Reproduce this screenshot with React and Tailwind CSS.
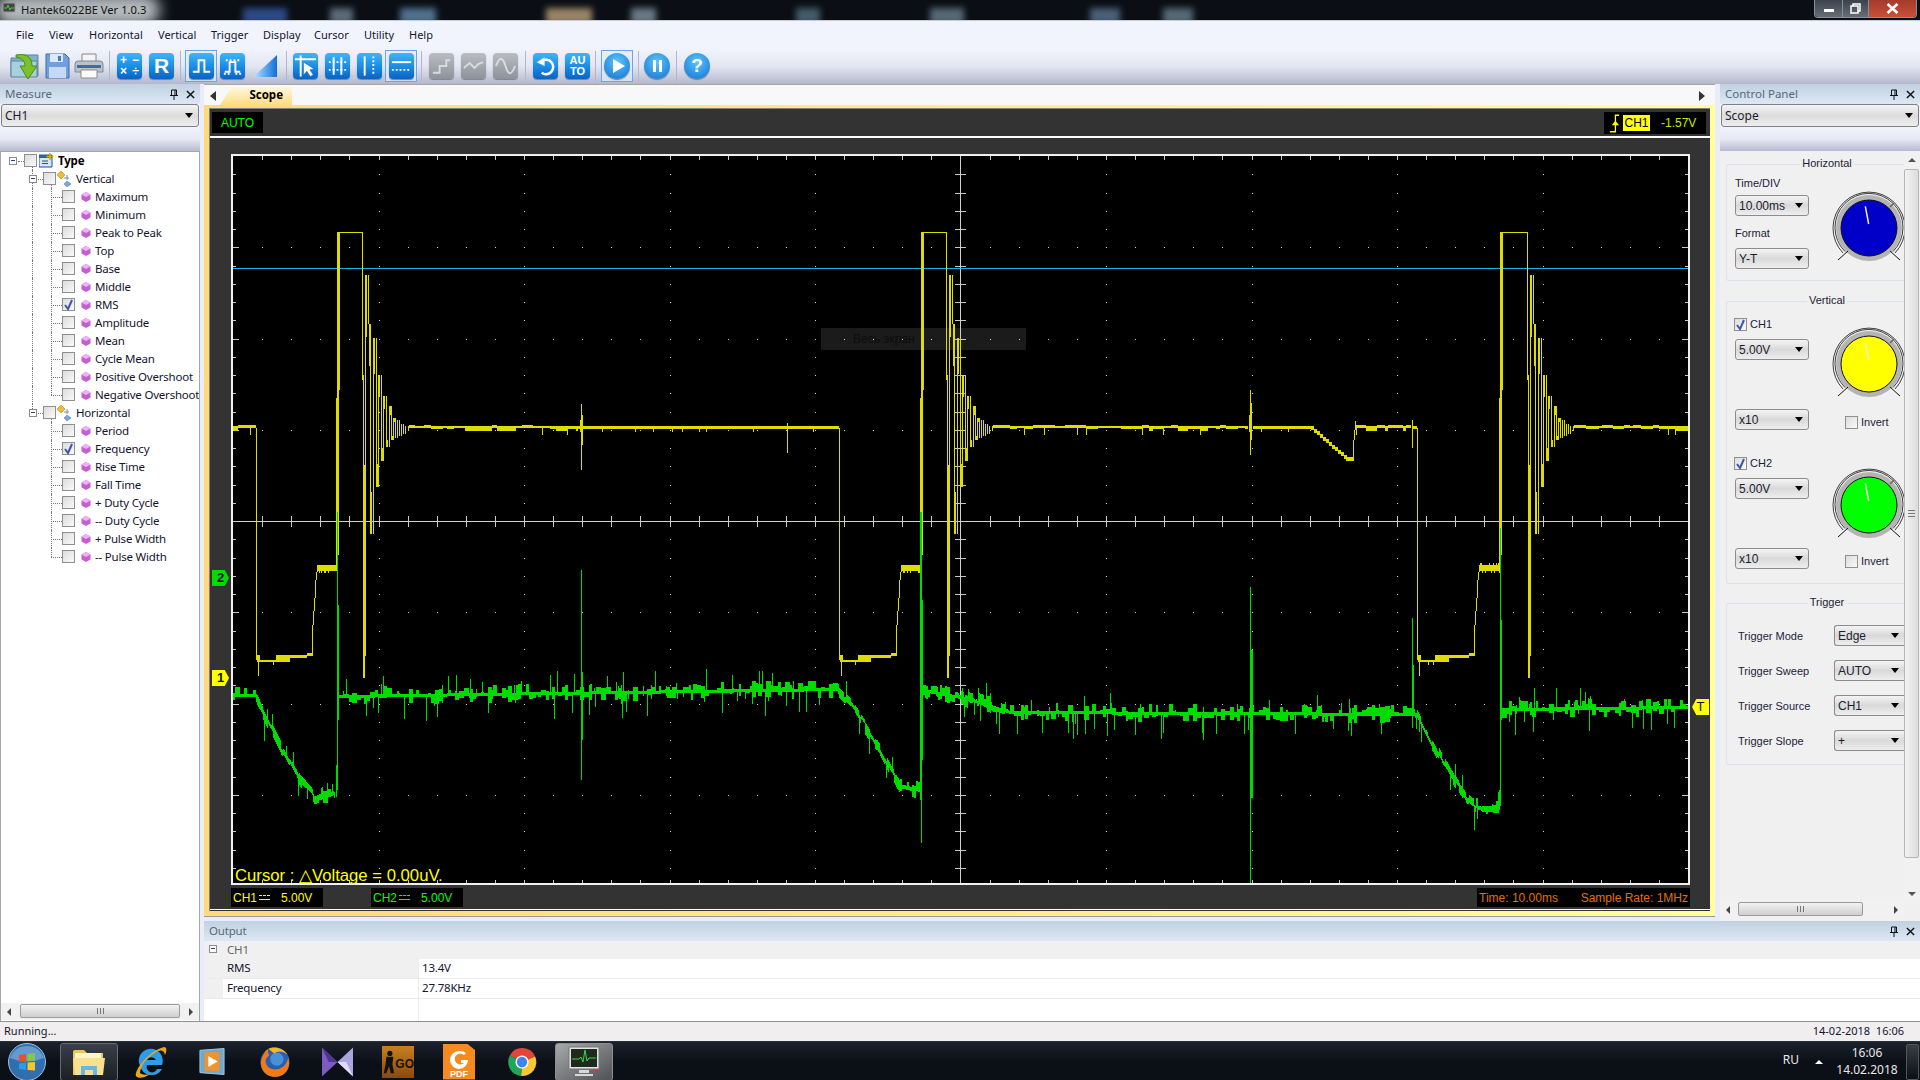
// App.jsx - Hantek6022BE scope window
import React from 'react';

// ---------- waveform generation ----------
function makeRand(seed) {
  let s = seed;
  return () => {
    s = (s * 1664525 + 1013904223) % 4294967296;
    return s / 4294967296;
  };
}

const RING = [
  [3, 275], [6, 324], [8, 534], [11, 338], [14, 487], [16, 375], [19, 461], [21, 396],
  [24, 447], [27, 406], [29, 440], [31, 418], [33, 438], [35, 420], [37, 436], [39, 424],
  [41, 434], [43, 426], [46, 431],
];

function buildYellow() {
  const r = makeRand(7);
  const p = [];
  const col = (x, a, b) => p.push(`M${x}.5 ${a}V${b}`);

  const noisy = (x0, x1) => {
    let x = x0;
    while (x < x1) {
      const len = 3 + Math.floor(r() * 10);
      const k = r();
      const top = k < 0.25 ? 425 : 426;
      const bot = k > 0.75 ? 431 : k > 0.45 ? 429 : 428;
      for (let i = x; i < Math.min(x + len, x1); i++) col(i, top, bot);
      if (r() < 0.12) col(x, top, 435);
      x += len;
    }
  };
  const flat = (x0, x1) => {
    for (let x = x0; x < x1; x++) col(x, 426, r() < 0.02 ? 432 : 429);
  };

  const pulse = (drop, tS, tE, rise, up, fall, bump) => {
    col(drop, 428, 660);
    for (let i = 1; i < 4; i++) col(drop + i, 655, 662);
    col(drop + 2, 655, 676);
    for (let x = drop + 4; x < tS; x++) col(x, 660, r() < 0.15 ? 665 : 662);
    for (let x = tS; x < tE; x++) col(x, 655, 662);
    for (let x = tE; x < rise; x++) col(x, x > rise - 6 ? 653 : 655, x > rise - 6 ? 656 : 658);
    col(rise, 625, 656);
    col(rise + 1, 611, 625);
    col(rise + 2, 598, 611);
    col(rise + 3, 580, 598);
    col(rise + 4, 572, 580);
    col(rise + 5, 565, 572);
    for (let x = rise + 6; x < up; x++) col(x, bump && r() < 0.2 ? 563 : 565, r() < 0.2 ? 573 : 571);
    col(up - 1, 398, 567);
    col(up, 232, 568);
    col(up + 1, 232, 555);
    col(up + 2, 232, 390);
    p.push(`M${up} 232.5H${fall}`);
    col(fall, 232, 380);
    col(fall + 1, 375, 678);
    col(fall + 2, 465, 678);
    col(fall + 3, 465, 656);
    let prev = 465;
    RING.forEach(([dx, y], i) => {
      col(fall + dx, Math.min(prev, y), Math.max(prev, y));
      if (i < 12) {
        const mid = y + (429 - y) * 0.4;
        col(fall + dx + 1, Math.min(y, mid), Math.max(y, mid));
      }
      prev = y;
    });
  };

  noisy(233, 256);
  pulse(256, 276, 290, 312, 337, 362, false);
  noisy(409, 578);
  flat(578, 835);
  col(581, 404, 470);
  col(582, 415, 445);
  col(580, 420, 432);
  col(787, 423, 453);
  flat(835, 839);
  pulse(839, 858, 871, 896, 921, 946, false);
  noisy(993, 1248);
  flat(1253, 1311);
  col(1250, 390, 455);
  col(1251, 403, 440);
  col(1249, 415, 432);
  for (let x = 1311; x < 1345; x += 3) {
    const m = 428 + ((x - 1311) / 34) * 30;
    for (let i = 0; i < 3; i++) col(x + i, Math.round(m) - 2, Math.round(m) + 2);
  }
  for (let x = 1346; x < 1353; x++) col(x, 457, 461);
  col(1353, 440, 461);
  col(1354, 430, 440);
  col(1355, 421, 430);
  noisy(1356, 1411);
  col(1412, 420, 448);
  noisy(1413, 1417);
  pulse(1417, 1435, 1449, 1474, 1500, 1527, true);
  noisy(1574, 1688);
  return p.join('');
}

function buildGreen() {
  const r = makeRand(21);
  const p = [];
  const col = (x, a, b) => p.push(`M${x}.5 ${a}V${b}`);

  const noise = (x0, x1, y0, y1) => {
    let bump = 0;
    let dip = 0;
    let left = 0;
    for (let x = x0; x < x1; x++) {
      if (left-- <= 0) {
        left = Math.floor(r() * 5);
        bump = r() < 0.6 ? Math.floor(r() * 9) : 0;
        dip = r() < 0.55 ? Math.floor(r() * 8) : 0;
      }
      const b = Math.round(y0 + ((x - x0) / (x1 - x0)) * (y1 - y0));
      let top = b - 1 - bump;
      let bot = b + 2 + dip;
      const k = r();
      if (k < 0.085) bot = b + 10 + Math.floor(r() * 18);
      else if (k < 0.11) top = b - 9 - Math.floor(r() * 14);
      col(x, top, bot);
    }
  };
  const ramp = (pts) => {
    let off = 0;
    let t = 0;
    let h = 3;
    for (let i = 0; i < pts.length - 1; i++) {
      const [x0, y0] = pts[i];
      const [x1, y1] = pts[i + 1];
      for (let x = x0; x < x1; x++) {
        if (t-- <= 0) {
          t = 1 + Math.floor(r() * 4);
          off = Math.floor(r() * 7) - 3;
          h = 2 + Math.floor(r() * 5);
        }
        const b = y0 + ((x - x0) / (x1 - x0)) * (y1 - y0);
        let top = Math.round(b + off - h);
        let bot = Math.round(b + off + h);
        const k = r();
        if (k < 0.06) bot += 10 + Math.floor(r() * 12);
        else if (k < 0.09) top -= 8 + Math.floor(r() * 6);
        col(x, top, bot);
      }
    }
  };

  noise(233, 257, 695, 695);
  ramp([[257, 703], [267, 722], [273, 733], [280, 747], [290, 763], [300, 780], [310, 790], [314, 797], [335, 793]]);
  col(336, 765, 797);
  col(337, 512, 790);
  col(338, 605, 720);
  noise(339, 839, 696, 689);
  ramp([[839, 692], [850, 702], [860, 718], [870, 733], [880, 750], [890, 770], [900, 785], [920, 790]]);
  col(920, 512, 800);
  col(921, 512, 843);
  col(922, 600, 760);
  noise(923, 965, 690, 698);
  noise(965, 1010, 698, 712);
  noise(1010, 1417, 712, 714);
  col(1250, 587, 883);
  col(1251, 650, 798);
  col(1252, 650, 798);
  col(581, 570, 780);
  col(582, 672, 740);
  col(1412, 618, 728);
  col(1413, 665, 716);
  ramp([[1417, 714], [1425, 730], [1440, 757], [1450, 773], [1465, 798], [1475, 806], [1499, 808]]);
  col(1499, 790, 810);
  col(1500, 528, 806);
  col(1501, 620, 720);
  noise(1502, 1688, 709, 707);
  return p.join('');
}

function buildGrid() {
  const dots = [];
  const ticks = [];
  const bright = [];
  const X0 = 233;
  const X1 = 1688;
  const Y0 = 156;
  const Y1 = 884;
  for (let i = 0; i <= 50; i++) {
    const x = Math.round(X0 + i * 29.1);
    if (i % 25 === 0 && i !== 25) continue;
    if (i !== 25) {
      bright.push(`M${x}.5 516V527`);
      ticks.push(`M${x}.5 ${Y0}V${Y0 + 4}M${x}.5 ${Y1 - 4}V${Y1}`);
    }
    for (let j = 1; j < 8; j++) {
      if (j === 4) continue;
      dots.push(`M${x} ${Math.round(Y0 + j * 91.25)}h1v1h-1z`);
    }
  }
  for (let j = 0; j <= 40; j++) {
    const y = Math.round(Y0 + j * 18.25);
    if (j === 0 || j === 40) continue;
    if (j !== 20) {
      bright.push(`M955 ${y}.5H966`);
      ticks.push(`M${X0} ${y}.5H${X0 + (j % 5 === 0 ? 6 : 3)}M${X1 - (j % 5 === 0 ? 6 : 3)} ${y}.5H${X1}`);
    }
    for (let i = 1; i < 10; i++) {
      if (i === 5) continue;
      dots.push(`M${Math.round(X0 + i * 145.5)} ${y}h1v1h-1z`);
    }
  }
  return { dots: dots.join(''), ticks: ticks.join(''), bright: bright.join('') };
}

const YELLOW = buildYellow();
const GREEN = buildGreen();
const GRID = buildGrid();

function Traces() {
  return (
    <svg viewBox="233 156 1455 727" className="relative block w-[1455px] h-[727px]" shapeRendering="crispEdges">
      <path d={GRID.dots} fill="#d8d8d8" />
      <path d={GRID.ticks} stroke="#c8c8c8" fill="none" />
      <path d={GRID.bright} stroke="#c8c8c8" fill="none" />
      <path d="M233 521.5H1688M960.5 156V884" stroke="#cfcfcf" fill="none" />
      <path d="M233 268.5H1688" stroke="#14b4e6" fill="none" />
      <path d={YELLOW} stroke="#dedc00" fill="none" />
      <path d={GREEN} stroke="#00dc00" fill="none" />
    </svg>
  );
}

// ---------- small widgets ----------
function Arrow({ className = '' }) {
  return <span className={`block w-0 h-0 border-x-[4px] border-x-transparent border-t-[5px] border-t-black ${className}`} />;
}

function Select({ value, className = '', clipped }) {
  return (
    <div className={`flex items-center justify-between h-[21px] border border-[#8c8c8c] rounded-[3px] bg-gradient-to-b from-[#f4f4f4] via-[#d9d9d9] to-[#eeeeee] pl-[3px] pr-[5px] text-[12px] text-[#1c1c30] font-['Liberation_Sans',sans-serif] ${clipped ? 'border-r-0 rounded-r-none pr-0' : ''} ${className}`}>
      <span>{value}</span>
      <Arrow className="mr-[0px]" />
    </div>
  );
}

function Check({ checked, className = '' }) {
  return (
    <span className={`relative block shrink-0 w-[13px] h-[13px] border border-[#8e8f8f] bg-gradient-to-br from-[#dcdcdc] to-[#fafafa] ${className}`}>
      {checked && (
        <svg viewBox="0 0 13 13" className="absolute left-[-1px] top-[-1px] w-[13px] h-[13px]">
          <path d="M3 7L6 11L10 2" stroke="#3f55a5" strokeWidth="2" fill="none" />
        </svg>
      )}
    </span>
  );
}

function PanelHeader({ title }) {
  return (
    <div className="flex items-center h-[20px] bg-gradient-to-b from-[#c0d1e1] to-[#dde8f4] pl-[5px] pr-[5px] shrink-0">
      <span className="text-[11.5px] text-[#5a6878] flex-1">{title}</span>
      <svg viewBox="0 0 10 11" className="w-[10px] h-[11px] mr-[7px]">
        <path d="M2.5 1H7.5V6.5H2.5ZM6 1V6.5M1 6.5H9M5 7V11" stroke="#111" fill="none" />
      </svg>
      <svg viewBox="0 0 10 10" className="w-[9px] h-[9px]">
        <path d="M1 1L9 9M9 1L1 9" stroke="#111" strokeWidth="1.6" />
      </svg>
    </div>
  );
}

function Band() {
  return <div className="h-[24px] shrink-0 bg-gradient-to-b from-[#f1f4fd] via-[#e6e8f4] to-[#b8bbcf]" />;
}

function HScroll({ left, width, track }) {
  return (
    <div className={`relative h-[17px] shrink-0 ${track}`}>
      <span className="absolute left-[6px] top-[5px] w-0 h-0 border-y-[4px] border-y-transparent border-r-[4px] border-r-[#444]" />
      <div style={{ left, width }} className="absolute top-[1px] h-[14px] border border-[#9a9a9a] rounded-[2px] bg-gradient-to-b from-[#f2f2f2] to-[#cfcfcf] flex items-center justify-center">
        <span className="block w-[7px] h-[6px] border-x border-[#777] relative">
          <span className="absolute left-[2px] top-0 h-[6px] border-l border-[#777]" />
        </span>
      </div>
      <span className="absolute right-[6px] top-[5px] w-0 h-0 border-y-[4px] border-y-transparent border-l-[4px] border-l-[#444]" />
    </div>
  );
}

// ---------- tree ----------
const VERTICAL = ['Maximum', 'Minimum', 'Peak to Peak', 'Top', 'Base', 'Middle', 'RMS', 'Amplitude', 'Mean', 'Cycle Mean', 'Positive Overshoot', 'Negative Overshoot'];
const HORIZONTAL = ['Period', 'Frequency', 'Rise Time', 'Fall Time', '+ Duty Cycle', '-- Duty Cycle', '+ Pulse Width', '-- Pulse Width'];

function MinusBox({ className = '' }) {
  return (
    <span className={`absolute block w-[8px] h-[8px] border border-[#8a8a8a] bg-white ${className}`}>
      <span className="absolute left-[1px] top-[2px] w-[4px] h-[1px] bg-[#2b3f8c]" />
    </span>
  );
}

function Gem() {
  return (
    <svg viewBox="0 0 10 10" className="absolute left-[80px] top-[4px] w-[10px] h-[10px]">
      <path d="M5 0L9.5 2.5V7.5L5 10L.5 7.5V2.5Z" fill="#c45fd0" />
      <path d="M5 0L9.5 2.5L5 5L.5 2.5Z" fill="#eeb4f2" />
    </svg>
  );
}

function LeafRow({ label, checked, last, lineGoes }) {
  return (
    <div className="relative h-[18px]">
      {lineGoes && <span className="absolute left-[31px] top-0 h-[18px] border-l border-dotted border-[#777]" />}
      <span className={`absolute left-[50px] top-0 border-l border-dotted border-[#777] ${last ? 'h-[9px]' : 'h-[18px]'}`} />
      <span className="absolute left-[50px] top-[9px] w-[11px] border-t border-dotted border-[#777]" />
      <Check checked={checked} className="absolute left-[61px] top-[2px]" />
      <Gem />
      <span className="absolute left-[94px] top-0 leading-[18px] whitespace-nowrap text-[#14142e]">{label}</span>
    </div>
  );
}

function GroupRow({ label, lineDown }) {
  return (
    <div className="relative h-[18px]">
      <span className={`absolute left-[31px] top-0 border-l border-dotted border-[#777] ${lineDown ? 'h-[18px]' : 'h-[9px]'}`} />
      <span className="absolute left-[35px] top-[9px] w-[7px] border-t border-dotted border-[#777]" />
      <span className="absolute left-[50px] top-[13px] h-[5px] border-l border-dotted border-[#777]" />
      <MinusBox className="left-[28px] top-[5px]" />
      <Check className="absolute left-[42px] top-[2px]" />
      <svg viewBox="0 0 16 16" className="absolute left-[55px] top-[1px] w-[16px] h-[16px]">
        <path d="M5 0L9 4L5 8L1 4Z" fill="#eebb33" stroke="#a67c10" strokeWidth=".5" />
        <path d="M11 4V9M8 7H13" stroke="#7a8ab0" fill="none" />
        <path d="M11 10L15 13L11 16L8 13Z" fill="#77a8e0" stroke="#4a72b0" strokeWidth=".5" />
      </svg>
      <span className="absolute left-[75px] top-0 leading-[18px] text-[#14142e]">{label}</span>
    </div>
  );
}

function MeasureTree() {
  return (
    <div className="flex-1 text-[11.5px] tracking-[-0.2px] border-t border-[#a6a6a6] overflow-hidden">
      <div className="relative h-[18px]">
        <MinusBox className="left-[8px] top-[5px]" />
        <span className="absolute left-[17px] top-[9px] w-[6px] border-t border-dotted border-[#777]" />
        <span className="absolute left-[31px] top-[15px] h-[3px] border-l border-dotted border-[#777]" />
        <Check className="absolute left-[23px] top-[2px]" />
        <svg viewBox="0 0 15 15" className="absolute left-[38px] top-[1px] w-[15px] h-[15px]">
          <path d="M0 2H13V14H0Z" fill="#dbe6f5" stroke="#1f4f95" />
          <path d="M0 2H13V5H0Z" fill="#2a62ad" />
          <path d="M3 8H9M3 10.5H9" stroke="#1f4f95" fill="none" />
          <path d="M11 0V7M7.500 3.500H14.500" stroke="#e8a800" strokeWidth="1.600" />
        </svg>
        <span className="absolute left-[57px] top-0 leading-[18px] font-bold text-black">Type</span>
      </div>
      <GroupRow label="Vertical" lineDown />
      {VERTICAL.map((name, i) => (
        <LeafRow key={name} label={name} checked={name === 'RMS'} last={i === VERTICAL.length - 1} lineGoes />
      ))}
      <GroupRow label="Horizontal" />
      {HORIZONTAL.map((name, i) => (
        <LeafRow key={name} label={name} checked={name === 'Frequency'} last={i === HORIZONTAL.length - 1} />
      ))}
    </div>
  );
}

// ---------- toolbar ----------
const BLUE = 'bg-gradient-to-b from-[#3fb6f8] via-[#1b8ee6] to-[#0a63c4]';
const GREY = 'bg-gradient-to-b from-[#b9bcc3] to-[#8e929b]';

function Tool({ children, tone = BLUE, className = '' }) {
  return (
    <div className={`relative flex items-center justify-center shrink-0 w-[25px] h-[26px] rounded-[4px] shadow-[0_1px_1px_#7d8090] ${tone} ${className}`}>
      {children}
    </div>
  );
}

function Glyph({ d, dash, color = 'white' }) {
  return (
    <svg viewBox="0 0 26 26" className="w-[25px] h-[26px]">
      <path d={d} stroke={color} strokeWidth="2" fill="none" />
      {dash && <path d={dash} stroke={color} strokeWidth="2" strokeDasharray="2 2" fill="none" />}
    </svg>
  );
}

function Picked({ children, className = '' }) {
  return (
    <div className={`flex items-center justify-center shrink-0 w-[32px] h-[32px] border border-[#6aa6ee] bg-[#e3ecfa]/70 ${className}`}>
      {children}
    </div>
  );
}

function Sep({ className = '' }) {
  return <span className={`block w-[1px] h-[30px] bg-[#b3b6c8] shrink-0 ${className}`} />;
}

function RoundTool({ children, className = '' }) {
  return (
    <div className={`flex items-center justify-center shrink-0 w-[26px] h-[26px] rounded-full bg-[radial-gradient(circle_at_50%_35%,#5cc6fb,#0f6fcf)] shadow-[0_1px_1px_#7d8090] ${className}`}>
      {children}
    </div>
  );
}

function Toolbar() {
  return (
    <div className="flex items-center h-[36px] shrink-0 pl-[10px] bg-gradient-to-b from-[#f1f4fd] via-[#e4e7f2] to-[#b5b8cc]">
      <svg viewBox="0 0 30 28" className="w-[30px] h-[28px] shrink-0">
        <path d="M1 6H11L13 3H28V24H1Z" fill="#7fb3c9" stroke="#5a8499" />
        <path d="M1 9H27V25H1Z" fill="#a8cfdd" stroke="#5a8499" />
        <path d="M6 3C18 1 22 6 22 14H27L18 27L10 14H15C15 9 12 6 6 5Z" fill="#7cc02a" stroke="#4d8a12" />
      </svg>
      <svg viewBox="0 0 25 26" className="w-[25px] h-[26px] ml-[5px] shrink-0">
        <path d="M1 1H20L24 5V25H1Z" fill="#6f9fdd" stroke="#3f6cb0" />
        <path d="M5 1H18V9H5Z" fill="#dce8f8" />
        <path d="M13 3H16V8H13Z" fill="#4a78bb" />
        <path d="M4 14H21V25H4Z" fill="#c5d9f3" />
      </svg>
      <svg viewBox="0 0 30 26" className="w-[30px] h-[26px] ml-[4px] shrink-0">
        <path d="M8 1H22V10H8Z" fill="#f4f4f4" stroke="#888" />
        <path d="M1 11Q1 8 4 8H26Q29 8 29 11V19H1Z" fill="#b8c2cd" stroke="#7f8a96" />
        <path d="M3 12H27V15H3Z" fill="#3d6f9e" />
        <path d="M7 17H23V25H7Z" fill="#fafafa" stroke="#8e8e8e" />
      </svg>
      <Sep className="ml-[5px]" />
      <Tool className="ml-[7px] text-white font-['Liberation_Sans',sans-serif] font-bold text-[12px] leading-[11px]">
        <div className="grid grid-cols-2 gap-x-[5px] text-center">
          <span>+</span><span>−</span><span>×</span><span>÷</span>
        </div>
      </Tool>
      <Tool className="ml-[7px] text-white font-['Liberation_Sans',sans-serif] font-bold text-[21px]">R</Tool>
      <Sep className="ml-[6px]" />
      <Picked className="ml-[4px]"><Tool><Glyph d="M4 19H10V7H16V19H22" /></Tool></Picked>
      <Tool className="ml-[3px]"><Glyph d="M5 19H10V9H16V19H21" dash="M6 7H20M4 21H10M16 21H22" /></Tool>
      <svg viewBox="0 0 26 26" className="w-[26px] h-[24px] ml-[7px] shrink-0">
        <defs>
          <linearGradient id="ramp" x1="0" x2="1" y1="0" y2="0">
            <stop offset="0" stopColor="#bfe6fb" />
            <stop offset="1" stopColor="#0f6fd6" />
          </linearGradient>
        </defs>
        <path d="M0 25L26 1V25Z" fill="url(#ramp)" />
      </svg>
      <Sep className="ml-[8px]" />
      <Tool className="ml-[6px]">
        <svg viewBox="0 0 26 26" className="w-[25px] h-[26px]">
          <path d="M2 6H24M8 2V24" stroke="white" strokeWidth="2" fill="none" />
          <path d="M11 9V22L14.500 18.500L18 24L21 22L17.500 17L22 16Z" fill="white" stroke="#0a63c4" strokeWidth=".5" />
        </svg>
      </Tool>
      <Tool className="ml-[7px]"><Glyph d="M9 4V22M17 4V22" dash="M4 9H22M4 17H22" /></Tool>
      <Tool className="ml-[7px]"><Glyph d="M8 3V23" dash="M17 3V23" /></Tool>
      <Picked className="ml-[3px]"><Tool><Glyph d="M3 9H23" dash="M3 17H23" /></Tool></Picked>
      <Sep className="ml-[4px]" />
      <Tool tone={GREY} className="ml-[7px]"><Glyph d="M4 20H11V13H18V7H22" color="#d9dbe0" /></Tool>
      <Tool tone={GREY} className="ml-[7px]"><Glyph d="M3 15L9 10L14 15L18 11L23 9" color="#d9dbe0" /></Tool>
      <Tool tone={GREY} className="ml-[7px]"><Glyph d="M3 13C7 3 10 3 13 13S19 23 23 13" color="#d9dbe0" /></Tool>
      <Sep className="ml-[7px]" />
      <Tool className="ml-[7px]">
        <svg viewBox="0 0 26 26" className="w-[25px] h-[26px]">
          <path d="M9 8A7.500 7.500 0 1 1 9 20" stroke="white" strokeWidth="2.600" fill="none" />
          <path d="M4 9L12 4V13Z" fill="white" />
        </svg>
      </Tool>
      <Tool className="ml-[7px] text-white font-['Liberation_Sans',sans-serif] font-bold text-[11px] leading-[11px] text-center">
        <span>AU<br />TO</span>
      </Tool>
      <Sep className="ml-[5px]" />
      <Picked className="ml-[5px]">
        <RoundTool><svg viewBox="0 0 26 26" className="w-[26px] h-[26px]"><path d="M9 6L21 13L9 20Z" fill="white" /></svg></RoundTool>
      </Picked>
      <Sep className="ml-[5px]" />
      <RoundTool className="ml-[5px]"><svg viewBox="0 0 26 26" className="w-[26px] h-[26px]"><path d="M9 7H12V19H9ZM15 7H18V19H15Z" fill="white" /></svg></RoundTool>
      <Sep className="ml-[6px]" />
      <RoundTool className="ml-[7px] text-white font-['Liberation_Sans',sans-serif] font-bold text-[19px]">?</RoundTool>
    </div>
  );
}

// ---------- knob ----------
function Knob({ color, className = '' }) {
  return (
    <svg viewBox="-38 -38 76 80" className={`absolute w-[76px] h-[80px] ${className}`}>
      <path d="M-26 25A36 36 0 1 1 26 25" stroke="#111" strokeWidth=".8" fill="none" />
      <path d="M-24 23.500A34 34 0 1 1 24 23.500" stroke="#111" strokeWidth=".8" fill="none" />
      <circle cx="0" cy="0" r="33" fill="#b4b4b4" />
      <circle cx="0" cy="0" r="28" fill={color} stroke="#111" strokeWidth="1" />
      <path d="M-3.700 -21.700L-.3 -4" stroke="#eeeed0" strokeWidth="1.500" />
      <path d="M-21 23L-31 32M21 23L31 32" stroke="#111" strokeWidth="1" />
      <path d="M21 -21L25 -25" stroke="#666" strokeWidth="1.500" />
    </svg>
  );
}

function GroupBox({ title, className = '', children }) {
  return (
    <div className={`relative border border-r-0 border-[#dce3ea] rounded-l-[3px] ${className}`}>
      <span className="absolute left-[85px] top-[-9px] w-[30px] text-center leading-[14px] whitespace-nowrap flex justify-center">
        <span className="bg-[#f0f0f0] px-[2px] text-[#1a2238]">{title}</span>
      </span>
      {children}
    </div>
  );
}

function Labeled({ children, className = '' }) {
  return <span className={`block leading-[14px] text-[#1a2238] ${className}`}>{children}</span>;
}

function ChannelRow({ name }) {
  return (
    <div className="flex items-center gap-[3px] ml-[7px]">
      <Check checked />
      <Labeled>{name}</Labeled>
    </div>
  );
}

function TriggerRow({ label, value }) {
  return (
    <div className="flex items-center h-[21px] mb-[14px]">
      <Labeled className="w-[96px] ml-[11px] shrink-0">{label}</Labeled>
      <Select value={value} clipped className="w-[70px]" />
    </div>
  );
}

function ControlPanel() {
  return (
    <div className="flex flex-col w-[200px] shrink-0 ml-[5px] bg-[#f0f0f0]">
      <PanelHeader title="Control Panel" />
      <div className="h-[23px] shrink-0 px-[1px] bg-[#f1f4fd]">
        <div className="flex items-center justify-between h-[23px] border border-[#7f7f8a] rounded-[3px] bg-gradient-to-b from-[#f4f4f4] via-[#dcdcdc] to-[#eeeeee] pl-[3px] pr-[5px] text-[12px] text-[#1c1c30]">
          <span>Scope</span><Arrow />
        </div>
      </div>
      <Band />
      <div className="flex flex-1 min-h-0">
        <div className="flex-1 flex flex-col min-w-0 text-[11px] font-['Liberation_Sans',sans-serif]">
          <div className="flex-1 overflow-hidden pt-[13px] pl-[6px]">
            <GroupBox title="Horizontal" className="h-[117px] pt-[11px]">
              <Labeled className="ml-[8px]">Time/DIV</Labeled>
              <Select value="10.00ms" className="w-[74px] ml-[8px] mt-[5px]" />
              <Labeled className="ml-[8px] mt-[10px]">Format</Labeled>
              <Select value="Y-T" className="w-[74px] ml-[8px] mt-[8px]" />
              <Knob color="#0000c8" className="left-[104px] top-[25px]" />
            </GroupBox>
            <GroupBox title="Vertical" className="h-[283px] mt-[20px] pt-[15px]">
              <ChannelRow name="CH1" />
              <Select value="5.00V" className="w-[74px] ml-[8px] mt-[8px]" />
              <Knob color="#ffff00" className="left-[104px] top-[24px]" />
              <div className="flex items-center mt-[49px]">
                <Select value="x10" className="w-[74px] ml-[8px]" />
                <Check className="ml-[36px] mt-[5px]" />
                <Labeled className="ml-[3px] mt-[5px]">Invert</Labeled>
              </div>
              <div className="mt-[26px]"><ChannelRow name="CH2" /></div>
              <Select value="5.00V" className="w-[74px] ml-[8px] mt-[8px]" />
              <Knob color="#00ff00" className="left-[104px] top-[165px]" />
              <div className="flex items-center mt-[49px]">
                <Select value="x10" className="w-[74px] ml-[8px]" />
                <Check className="ml-[36px] mt-[5px]" />
                <Labeled className="ml-[3px] mt-[5px]">Invert</Labeled>
              </div>
            </GroupBox>
            <GroupBox title="Trigger" className="h-[162px] mt-[19px] pt-[21px]">
              <TriggerRow label="Trigger Mode" value="Edge" />
              <TriggerRow label="Trigger Sweep" value="AUTO" />
              <TriggerRow label="Trigger Source" value="CH1" />
              <TriggerRow label="Trigger Slope" value="+" />
            </GroupBox>
          </div>
          <HScroll left="18px" width="125px" track="bg-[#f1f1f1] mb-[3px]" />
        </div>
        <div className="relative w-[15px] shrink-0 mr-[1px] bg-[#f1f1f1] mb-[20px]">
          <span className="absolute left-[4px] top-[7px] w-0 h-0 border-x-[4px] border-x-transparent border-b-[4px] border-b-[#555]" />
          <div className="absolute left-0 right-0 top-[18px] h-[689px] border border-[#b5b5b5] rounded-[2px] bg-gradient-to-r from-[#f2f2f2] to-[#dcdcdc] flex items-center justify-center">
            <span className="block w-[7px] h-[7px] border-y border-[#777] relative">
              <span className="absolute left-0 top-[2px] w-[7px] border-t border-[#777]" />
            </span>
          </div>
          <span className="absolute left-[4px] bottom-[5px] w-0 h-0 border-x-[4px] border-x-transparent border-t-[4px] border-t-[#555]" />
        </div>
      </div>
    </div>
  );
}

// ---------- scope ----------
function Marker({ text, color, className = '', flip }) {
  return (
    <div className={`absolute w-[17px] h-[16px] flex items-center justify-center text-[13px] font-bold text-[#111] ${color} ${flip ? '[clip-path:polygon(0_50%,25%_0,100%_0,100%_100%,25%_100%)]' : '[clip-path:polygon(0_0,75%_0,100%_50%,75%_100%,0_100%)]'} ${className}`}>
      {text}
    </div>
  );
}

function DcMark({ color }) {
  return (
    <span className="inline-block w-[11px] h-[6px] mx-[2px] align-middle">
      <span className={`block h-0 border-t border-dashed ${color}`} />
      <span className={`block h-0 mt-[3px] border-t ${color}`} />
    </span>
  );
}

function Scope() {
  return (
    <div className="flex flex-col w-[1511px] shrink-0">
      <div className="flex items-end relative h-[21px] shrink-0 bg-[#f8f8f8] border-t border-[#a6a6a6]">
        <span className="absolute left-[6px] top-[6px] w-0 h-0 border-y-[5px] border-y-transparent border-r-[6px] border-r-[#333]" />
        <div className="ml-[16px] w-[72px] h-[18px] pb-[2px] bg-gradient-to-b from-[#fff8dc] to-[#ffdc80] [clip-path:polygon(16%_0,100%_0,100%_100%,0_100%)] flex items-center justify-end pr-[9px] text-[11.5px] font-bold text-black">
          Scope
        </div>
        <span className="absolute right-[10px] top-[6px] w-0 h-0 border-y-[5px] border-y-transparent border-l-[6px] border-l-[#333]" />
      </div>
      <div className="flex-1 bg-gradient-to-r from-[#ffd97a] to-[#ffff9c] pl-[5px] pr-[5px] pt-[3px] pb-[5px] border-b border-[#9a9a9a] min-h-0 mb-[4px]">
        <div className="flex flex-col h-[803px] bg-[#333333] border-l border-t border-[#808080] font-['Liberation_Sans',sans-serif]">
          <div className="flex items-start justify-between h-[24px] shrink-0 border-b-2 border-white pt-[3px] pl-[2px] pr-[4px] box-content">
            <div className="w-[51px] h-[21px] bg-black flex items-center justify-center text-[12px] text-[#00ff00]">AUTO</div>
            <div className="flex items-center w-[102px] h-[22px] bg-black pl-[5px]">
              <svg viewBox="0 0 12 20" className="w-[11px] h-[19px] shrink-0">
                <path d="M11 1H7V19H1" stroke="#ffff00" fill="none" strokeWidth="1.400" />
                <path d="M7 7L11 12H3Z" fill="#ffff00" />
              </svg>
              <span className="ml-[3px] w-[27px] h-[16px] bg-[#ffff00] text-black text-[12px] leading-[16px] text-center">CH1</span>
              <span className="ml-[11px] text-[12px] text-[#c8e400]">-1.57V</span>
            </div>
          </div>
          <div className="relative ml-[21px] mr-[20px] mt-[16px] h-[731px] shrink-0 border-2 border-[#f0f0f0] bg-black">
            <Marker text="2" color="bg-[#00dc00]" className="left-[-21px] top-[414px]" />
            <Marker text="1" color="bg-[#ffff00]" className="left-[-21px] top-[514px]" />
            <Marker text="T" flip color="bg-[#ffff00]" className="right-[-21px] top-[543px] text-[11px] font-normal" />
            <div className="absolute left-[588px] top-[172px] w-[205px] h-[22px] bg-[#1b1b1b] flex items-center pl-[32px] text-[12px] text-[#0d0d0d]">
              Весь экран
            </div>
            <Traces />
            <span className="absolute left-[2px] bottom-[-3px] text-[16.7px] leading-[20px] whitespace-nowrap text-[#ffff00]">
              Cursor : △Voltage = 0.00uV.
            </span>
          </div>
          <div className="flex items-center h-[25px] pt-[1px] pl-[21px] pr-[20px] text-[12px] border-b border-white">
            <div className="w-[92px] h-[19px] bg-black flex items-center pl-[2px] text-[#ffff00]">
              CH1<DcMark color="border-[#ffff00]" /><span className="ml-[9px]">5.00V</span>
            </div>
            <div className="ml-[48px] w-[92px] h-[19px] bg-black flex items-center pl-[2px] text-[#00ff00]">
              CH2<DcMark color="border-[#00ff00]" /><span className="ml-[9px]">5.00V</span>
            </div>
            <div className="ml-auto w-[213px] h-[19px] bg-black flex items-center justify-between px-[2px] text-[#e07000]">
              <span>Time: 10.00ms</span><span>Sample Rate: 1MHz</span>
            </div>
          </div>
        </div>
      </div>
    </div>
  );
}

function Output() {
  return (
    <div className="flex flex-col h-[100px] ml-[4px] shrink-0 bg-white text-[11.5px] tracking-[-0.2px]">
      <PanelHeader title="Output" />
      <div className="relative flex items-center h-[18px] bg-[#f0f0f0] text-[#666]">
        <MinusBox className="left-[5px] top-[4px]" />
        <span className="ml-[23px]">CH1</span>
      </div>
      <div className="flex h-[20px] border-b border-[#ececec] leading-[18px] text-[#14142e]">
        <span className="w-[214px] pl-[23px] bg-[#f0f0f0]">RMS</span>
        <span className="flex-1 pl-[3px] border-l border-[#ececec]">13.4V</span>
      </div>
      <div className="flex h-[20px] border-b border-[#ececec] leading-[18px] text-[#14142e]">
        <span className="w-[19px] bg-[#f0f0f0]" />
        <span className="w-[195px] pl-[4px]">Frequency</span>
        <span className="flex-1 pl-[3px] border-l border-[#ececec]">27.78KHz</span>
      </div>
      <div className="flex flex-1">
        <span className="w-[214px]" />
        <span className="flex-1 border-l border-[#ececec]" />
      </div>
    </div>
  );
}

// ---------- title and task bars ----------
const BLOBS = [
  'left-[243px] w-[44px] bg-[#2c4a86]',
  'left-[330px] w-[23px] bg-[#5a6a78]',
  'left-[400px] w-[36px] bg-[#50708e]',
  'left-[546px] w-[46px] bg-[#9a8466]',
  'left-[631px] w-[25px] bg-[#6a7884]',
  'left-[796px] w-[24px] bg-[#445c6a]',
  'left-[930px] w-[34px] bg-[#566876]',
  'left-[1090px] w-[30px] bg-[#4a6078]',
  'left-[1163px] w-[30px] bg-[#566876]',
];

function TitleBar() {
  return (
    <div className="relative h-[21px] shrink-0 overflow-hidden bg-[#0b0f15] border-b border-[#c8ccd4]">
      {BLOBS.map((b) => (
        <span key={b} className={`absolute top-[8px] h-[16px] blur-[3px] ${b}`} />
      ))}
      <span className="absolute left-[-5px] top-[-6px] w-[165px] h-[32px] rounded-full bg-[#dfe3e6]/80 blur-[7px]" />
      <svg viewBox="0 0 14 14" className="absolute left-[2px] top-[2px] w-[14px] h-[14px]">
        <path d="M1 1H13V10H1Z" fill="#444" stroke="#999" />
        <path d="M2 6H5L6 3L8 8L9 6H12" stroke="#4c4" fill="none" />
        <path d="M4 11H10V13H4Z" fill="#aaa" />
      </svg>
      <span className="absolute left-[21px] top-[1px] text-[11.2px] leading-[18px] text-[#111]">Hantek6022BE Ver 1.0.3</span>
      <div className="absolute right-[3px] top-0 flex h-[18px] border border-t-0 border-[#8a9098] rounded-b-[4px] overflow-hidden">
        <div className="w-[28px] flex items-center justify-center bg-gradient-to-b from-[#3c424c] to-[#686e78] border-r border-[#8a9098]">
          <span className="block w-[10px] h-[3px] mt-[4px] bg-white" />
        </div>
        <div className="w-[26px] flex items-center justify-center bg-gradient-to-b from-[#3c424c] to-[#686e78] border-r border-[#8a9098]">
          <svg viewBox="0 0 11 11" className="w-[11px] h-[11px]"><path d="M3 3V1H10V8H8M1 3H8V10H1Z" stroke="white" strokeWidth="1.500" fill="none" /></svg>
        </div>
        <div className="w-[47px] flex items-center justify-center bg-gradient-to-b from-[#a53a2c] to-[#c8503a]">
          <svg viewBox="0 0 11 10" className="w-[13px] h-[11px]"><path d="M1 1L10 9M10 1L1 9" stroke="white" strokeWidth="2.400" /></svg>
        </div>
      </div>
    </div>
  );
}

function MenuBar() {
  const items = [['File', 'w-[33px]'], ['View', 'w-[40px]'], ['Horizontal', 'w-[69px]'], ['Vertical', 'w-[53px]'], ['Trigger', 'w-[52px]'], ['Display', 'w-[51px]'], ['Cursor', 'w-[50px]'], ['Utility', 'w-[45px]'], ['Help', 'w-[30px]']];
  return (
    <div className="flex items-center h-[27px] shrink-0 bg-[#f1f4fd] text-[11px] text-[#14142e] pl-[16px] pt-[1px]">
      {items.map(([name, cls]) => (
        <span key={name} className={cls}>{name}</span>
      ))}
    </div>
  );
}

function TaskSlot({ children, active, className = '' }) {
  return (
    <div className={`flex items-center justify-center shrink-0 h-[38px] w-[58px] rounded-[3px] ${active || ''} ${className}`}>
      {children}
    </div>
  );
}

function Taskbar() {
  return (
    <div className="flex items-center h-[40px] shrink-0 bg-gradient-to-b from-[#1c222c] via-[#0b1018] to-[#0b0f16] border-t border-[#2b303a] text-[#e8e8e8] text-[12px]">
      <svg viewBox="0 0 38 38" className="w-[38px] h-[38px] ml-[8px] shrink-0">
        <circle cx="19" cy="19" r="18.500" fill="#2f6fb0" stroke="#9cc4e4" strokeWidth="1" />
        <path d="M2 15A18 18 0 0 1 36 15Q19 22 2 15Z" fill="#8ec0e8" opacity=".55" />
        <path d="M11 12L18 11V18L11 19Z" fill="#e8502c" />
        <path d="M19.500 11L27 10V17.500L19.500 18Z" fill="#8cc63e" />
        <path d="M11 20.500L18 19.500V27L11 26Z" fill="#2c9ae8" />
        <path d="M19.500 19.500L27 19V27.500L19.500 27Z" fill="#f6c528" />
      </svg>
      <TaskSlot active="bg-gradient-to-b from-[#3a3f47] to-[#1b1f26] border border-[#666c75]" className="ml-[14px]">
        <svg viewBox="0 0 34 30" className="w-[34px] h-[30px]">
          <path d="M1 5Q1 3 3 3H12L15 6H31V28H1Z" fill="#e9c65e" />
          <path d="M3 6H29V12H3Z" fill="#fff6c8" />
          <path d="M1 11H33L31 28H3Z" fill="#f7e08e" />
          <path d="M9 19H25V28H21V23H13V28H9Z" fill="#66b8e8" />
        </svg>
      </TaskSlot>
      <TaskSlot className="ml-[4px]">
        <svg viewBox="0 0 34 34" className="w-[34px] h-[34px]">
          <path d="M6 21A12 12 0 1 1 28 20H13A5 5 0 0 0 23 24H28A12 12 0 0 1 6 21ZM13 15H22A5 5 0 0 0 13 15Z" fill="#2e9be8" />
          <path d="M2 31C0 26 14 6 30 2C33 2 33 6 31 10C30 5 27 5 24 6C12 12 6 22 6 28C8 30 12 30 16 29C11 33 4 34 2 31Z" fill="#e8a81c" />
        </svg>
      </TaskSlot>
      <TaskSlot className="ml-[3px]">
        <svg viewBox="0 0 28 30" className="w-[26px] h-[29px]">
          <path d="M1 3L27 1V29L1 27Z" fill="#6da9cf" stroke="#a8cbe0" />
          <path d="M6 5H22V25H6Z" fill="#f2922c" />
          <path d="M10 9L20 15L10 21Z" fill="white" />
        </svg>
      </TaskSlot>
      <TaskSlot className="ml-[5px]">
        <svg viewBox="0 0 34 34" className="w-[32px] h-[32px]">
          <circle cx="17" cy="17" r="15.500" fill="#2a5fb0" />
          <circle cx="19" cy="14" r="7" fill="#4a90d8" />
          <path d="M7 5C5 9 2 13 2 18C2 27 9 33 17 33C25 33 32 27 32 18C32 16 31.500 14 31 12C30 20 24 25 17 25C11 25 7 21 7 16C7 13 9 11 11 10C10 8 9 6 10 3Z" fill="#ef7a1a" />
          <path d="M10 3C16 0 26 2 30 9C25 5 20 5 16 8Z" fill="#f7b42c" />
        </svg>
      </TaskSlot>
      <TaskSlot className="ml-[4px]">
        <svg viewBox="0 0 34 30" className="w-[33px] h-[32px]">
          <path d="M1 0L17 15L1 30Z" fill="#7c5cc0" />
          <path d="M33 0L17 15L33 30Z" fill="#aaa6e0" />
          <path d="M1 0L17 15H8Z" fill="#4e3590" />
          <path d="M33 30L17 15H26Z" fill="#e0dcf8" />
        </svg>
      </TaskSlot>
      <TaskSlot className="ml-[3px]">
        <div className="relative w-[32px] h-[32px] bg-gradient-to-b from-[#c8801e] to-[#8a4a10] font-['Liberation_Sans',sans-serif]">
          <svg viewBox="0 0 14 28" className="absolute left-[1px] top-[2px] w-[12px] h-[28px]">
            <circle cx="8" cy="4" r="3" fill="#111" />
            <path d="M4 8H12L11 17L13 27H9L7 19L4 27H1L3 16Z" fill="#111" />
          </svg>
          <span className="absolute right-[0px] top-[12px] text-[12px] font-bold leading-[13px] text-[#1a1208]">GO</span>
        </div>
      </TaskSlot>
      <TaskSlot className="ml-[3px]">
        <div className="relative flex flex-col items-center justify-end w-[32px] h-[36px] bg-[#f58a1f] [clip-path:polygon(0_0,75%_0,100%_18%,100%_100%,0_100%)] pb-[1px] text-white font-['Liberation_Sans',sans-serif]">
          <svg viewBox="0 0 20 20" className="absolute top-[6px] w-[20px] h-[20px]">
            <path d="M10 1A9 9 0 1 0 19 10H12V13H15A5.500 5.500 0 1 1 15 5L17 3A9 9 0 0 0 10 1Z" fill="white" />
          </svg>
          <span className="text-[9px] font-bold leading-[10px]">PDF</span>
        </div>
      </TaskSlot>
      <TaskSlot className="ml-[5px]">
        <svg viewBox="0 0 32 32" className="w-[30px] h-[30px]">
          <path d="M16 16L3 9A15 15 0 0 1 30 10Z" fill="#e2453a" />
          <path d="M16 16L30 10A15 15 0 0 1 15 31Z" fill="#f8c82e" />
          <path d="M16 16L15 31A15 15 0 0 1 3 9Z" fill="#1fa65a" />
          <circle cx="16" cy="16" r="7" fill="white" />
          <circle cx="16" cy="16" r="5.500" fill="#3f83ee" />
        </svg>
      </TaskSlot>
      <TaskSlot active="bg-gradient-to-br from-[#a8aaac] to-[#4f5154] border border-[#8c8e90]" className="ml-[4px]">
        <svg viewBox="0 0 34 32" className="w-[34px] h-[32px]">
          <path d="M2 1H32V23H2Z" fill="#e4e4e4" stroke="#777" />
          <path d="M4 3H30V21H4Z" fill="#1f2a1f" />
          <path d="M5 13H12L14 11L16 16L18 4L20 15L22 12H29" stroke="#3fd24a" fill="none" />
          <path d="M12 24H22V27H12ZM8 28H26V30H8Z" fill="#d8d8d8" />
          <path d="M27 24H31V26H27Z" fill="#e03030" />
        </svg>
      </TaskSlot>
      <span className="ml-auto mb-[4px]">RU</span>
      <span className="ml-[16px] w-0 h-0 border-x-[4px] border-x-transparent border-b-[4px] border-b-white" />
      <div className="ml-[6px] w-[76px] pb-[2px] text-center leading-[17px]">
        <div>16:06</div>
        <div>14.02.2018</div>
      </div>
      <div className="ml-[1px] mr-[1px] w-[13px] h-[36px] border border-[#555] rounded-[2px] bg-gradient-to-b from-[#3a3f47] to-[#0b0f16]" />
    </div>
  );
}

export default function App() {
  return (
    <div className="flex flex-col w-[1920px] h-[1080px] overflow-hidden bg-[#e9ecf9] font-['Noto_Sans',sans-serif]">
      <TitleBar />
      <MenuBar />
      <Toolbar />
      <div className="flex h-[937px] shrink-0 min-h-0">
        <div className="flex flex-col w-[200px] shrink-0 bg-white">
          <PanelHeader title="Measure" />
          <div className="h-[23px] shrink-0 px-[1px] bg-[#f1f4fd]">
            <div className="flex items-center justify-between h-[23px] border border-[#7f7f8a] rounded-[3px] bg-gradient-to-b from-[#f4f4f4] via-[#dcdcdc] to-[#eeeeee] pl-[3px] pr-[5px] text-[12px] text-[#1c1c30]">
              <span>CH1</span><Arrow />
            </div>
          </div>
          <Band />
          <div className="flex flex-col flex-1 min-h-0 border-l border-r border-[#a6a6a6]">
            <MeasureTree />
            <HScroll left="19px" width="160px" track="bg-[#f1f1f1] mb-[1px]" />
          </div>
        </div>
        <div className="flex flex-col flex-1 min-w-0">
          <div className="flex h-[837px] shrink-0 pl-[4px]">
            <Scope />
            <ControlPanel />
          </div>
          <Output />
        </div>
      </div>
      <div className="flex items-center justify-between h-[19px] shrink-0 bg-[#f0eeee] border-t border-[#8f8f8f] text-[11px] text-[#14142e] pl-[4px] pr-[16px] box-content">
        <span>Running...</span>
        <span className="whitespace-pre">14-02-2018  16:06</span>
      </div>
      <Taskbar />
    </div>
  );
}
